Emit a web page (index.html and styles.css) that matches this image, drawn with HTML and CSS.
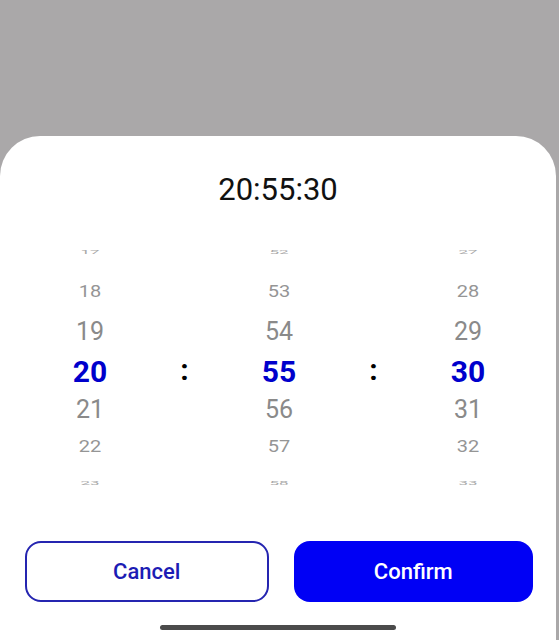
FILE: index.html
```html
<!DOCTYPE html>
<html>
<head>
<meta charset="utf-8">
<link rel="stylesheet" href="styles.css">
</head>
<body>
<div class="screen">
  <div class="sheet">
    <div class="title">20:55:30</div>
    <div class="wheel">
      <div class="col">
        <div class="row r3">17</div>
        <div class="row r2">18</div>
        <div class="row r1">19</div>
        <div class="row sel">20</div>
        <div class="row r1">21</div>
        <div class="row r2">22</div>
        <div class="row r3">23</div>
      </div>
      <div class="col sep">
        <div class="row"></div><div class="row"></div><div class="row"></div>
        <div class="row colon">:</div>
        <div class="row"></div><div class="row"></div><div class="row"></div>
      </div>
      <div class="col">
        <div class="row r3">52</div>
        <div class="row r2">53</div>
        <div class="row r1">54</div>
        <div class="row sel">55</div>
        <div class="row r1">56</div>
        <div class="row r2">57</div>
        <div class="row r3">58</div>
      </div>
      <div class="col sep">
        <div class="row"></div><div class="row"></div><div class="row"></div>
        <div class="row colon">:</div>
        <div class="row"></div><div class="row"></div><div class="row"></div>
      </div>
      <div class="col">
        <div class="row r3">27</div>
        <div class="row r2">28</div>
        <div class="row r1">29</div>
        <div class="row sel">30</div>
        <div class="row r1">31</div>
        <div class="row r2">32</div>
        <div class="row r3">33</div>
      </div>
    </div>
    <div class="actions">
      <button class="btn cancel">Cancel</button>
      <button class="btn confirm">Confirm</button>
    </div>
    <div class="home-indicator"></div>
  </div>
</div>
</body>
</html>
```

FILE: styles.css
```css
* { box-sizing: border-box; }
html, body {
  margin: 0;
  padding: 0;
  width: 559px;
  height: 640px;
  overflow: hidden;
  background: #aaa8a9;
  font-family: Roboto, "Liberation Sans", sans-serif;
}
.screen {
  width: 559px;
  height: 640px;
  padding-top: 136px;
}
.sheet {
  width: 556px;
  height: 504px;
  background: #ffffff;
  border-radius: 40px 40px 0 0;
  display: flex;
  flex-direction: column;
  align-items: center;
}
.title {
  margin-top: 36px;
  height: 36px;
  line-height: 36px;
  font-size: 31px;
  color: #111111;
  text-align: center;
}
.wheel {
  margin-top: 24px;
  display: flex;
  justify-content: center;
  width: 100%;
  padding-left: 2px;
}
.col {
  width: 94.5px;
  display: flex;
  flex-direction: column;
}
.row {
  height: 39px;
  display: flex;
  align-items: center;
  justify-content: center;
  color: #8a8a8a;
}
.row:nth-child(2),
.row:nth-child(3),
.row:nth-child(4) { height: 40px; }
.row:nth-child(5) { height: 36px; }
.row:nth-child(6),
.row:nth-child(7) { height: 37px; }
.r1 { font-size: 25px; color: #8a8a8a; }
.r2 { font-size: 20px; color: #959595; transform: scaleY(0.8); }
.r3 { font-size: 17px; color: #a8a8a8; transform: scaleY(0.35); }
.sel {
  font-size: 30px;
  font-weight: 700;
  color: #0000cc;
}
.colon {
  font-size: 30px;
  font-weight: 700;
  color: #000000;
  padding-bottom: 3px;
}
.actions {
  margin-top: 40px;
  width: 100%;
  padding: 0 23px 0 25px;
  display: flex;
  gap: 25px;
}
.btn {
  flex: 1 1 0;
  min-width: 0;
  height: 61px;
  padding: 0;
  border-radius: 16px;
  font-family: Roboto, "Liberation Sans", sans-serif;
  font-size: 22px;
  font-weight: 500;
  cursor: pointer;
}
.cancel {
  background: #ffffff;
  border: 2px solid #2525b0;
  color: #1c1cb4;
}
.confirm {
  background: #0000f5;
  border: none;
  color: #ffffff;
}
.home-indicator {
  margin-top: 23px;
  width: 236px;
  height: 5px;
  border-radius: 3px;
  background: #4b4b4b;
}
```
